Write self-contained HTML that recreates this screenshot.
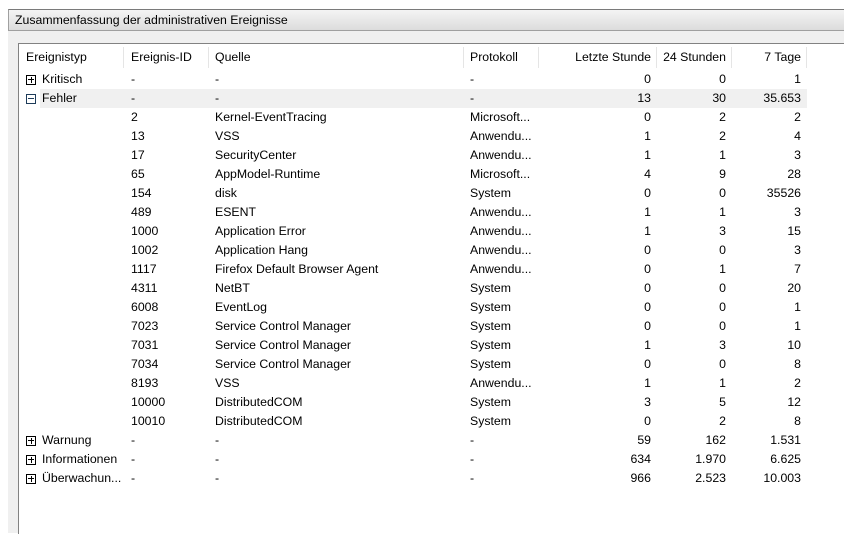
<!DOCTYPE html>
<html><head><meta charset="utf-8"><style>
body{margin:0;width:844px;height:533px;background:#fff;position:relative;overflow:hidden;font-family:"Liberation Sans",sans-serif;font-size:12.3px;color:#000}
.panel{position:absolute;left:8px;top:9px;width:836px;height:524px;background:#f0f0f0}
.title{position:absolute;left:8px;top:9px;width:836px;height:22px;border-top:1px solid #7a7a7a;border-bottom:1px solid #a0a0a0;border-left:1px solid #a0a0a0;background:linear-gradient(#f4f4f4,#dcdcdc);box-sizing:border-box}
.title span{position:absolute;left:6px;top:3px;font-size:12.3px}
.list{position:absolute;left:18px;top:43px;width:826px;height:490px;background:#fff;border-left:1px solid #828282;border-top:1px solid #828282}
.r{position:absolute;height:19px;line-height:19px;white-space:nowrap}
.sep{position:absolute;top:3px;width:1px;height:21px;background:#e5e5e5}
.hl{position:absolute;left:21px;width:767px;top:45px;height:19px;background:#f0f0f0}
.box{position:absolute;width:10px;height:10px;border:1px solid #000;box-sizing:border-box;top:5px;left:7px}
.box:before{content:"";position:absolute;left:1px;top:3px;width:6px;height:1px;background:currentColor}
.box.p:after{content:"";position:absolute;left:3.5px;top:1px;width:1px;height:6px;background:#000}
.box.m{border-color:#1e3c5a;color:#1e3c5a}
</style></head><body>
<div class="panel"></div>
<div class="title"><span>Zusammenfassung der administrativen Ereignisse</span></div>
<div class="list" id="L">
<div class="hl"></div>
</div>
<script>
var L=document.getElementById('L');
var cols=[104,189,444,519,637,712,787];
cols.forEach(function(x){var d=document.createElement('div');d.className='sep';d.style.left=x+'px';L.appendChild(d);});
function row(y,c,box){
 var h='';
 var lx=[7,112,196,451];
 if(box){h+='<div class="r" style="top:'+y+'px;left:0;width:20px"><div class="box '+box+'"></div></div>';}
 for(var i=0;i<4;i++){if(c[i]!==undefined&&c[i]!=='')h+='<div class="r" style="top:'+y+'px;left:'+(lx[i]+(i==0&&box?16:0))+'px">'+c[i]+'</div>';}
 var rx=[632,707,782];
 for(var j=0;j<3;j++){h+='<div class="r" style="top:'+y+'px;left:'+(rx[j]-100)+'px;width:100px;text-align:right">'+c[4+j]+'</div>';}
 L.insertAdjacentHTML('beforeend',h);
}
row(4,['Ereignistyp','Ereignis-ID','Quelle','Protokoll','Letzte Stunde','24 Stunden','7 Tage']);
var data=[
['Kritisch','-','-','-',0,0,1,'p'],
['Fehler','-','-','-',13,30,'35.653','m'],
['','2','Kernel-EventTracing','Microsoft...',0,2,2],
['','13','VSS','Anwendu...',1,2,4],
['','17','SecurityCenter','Anwendu...',1,1,3],
['','65','AppModel-Runtime','Microsoft...',4,9,28],
['','154','disk','System',0,0,35526],
['','489','ESENT','Anwendu...',1,1,3],
['','1000','Application Error','Anwendu...',1,3,15],
['','1002','Application Hang','Anwendu...',0,0,3],
['','1117','Firefox Default Browser Agent','Anwendu...',0,1,7],
['','4311','NetBT','System',0,0,20],
['','6008','EventLog','System',0,0,1],
['','7023','Service Control Manager','System',0,0,1],
['','7031','Service Control Manager','System',1,3,10],
['','7034','Service Control Manager','System',0,0,8],
['','8193','VSS','Anwendu...',1,1,2],
['','10000','DistributedCOM','System',3,5,12],
['','10010','DistributedCOM','System',0,2,8],
['Warnung','-','-','-',59,162,'1.531','p'],
['Informationen','-','-','-',634,'1.970','6.625','p'],
['Überwachun...','-','-','-',966,'2.523','10.003','p']];
data.forEach(function(d,i){row(26+i*19,d,d[7]);});
</script>
</body></html>
